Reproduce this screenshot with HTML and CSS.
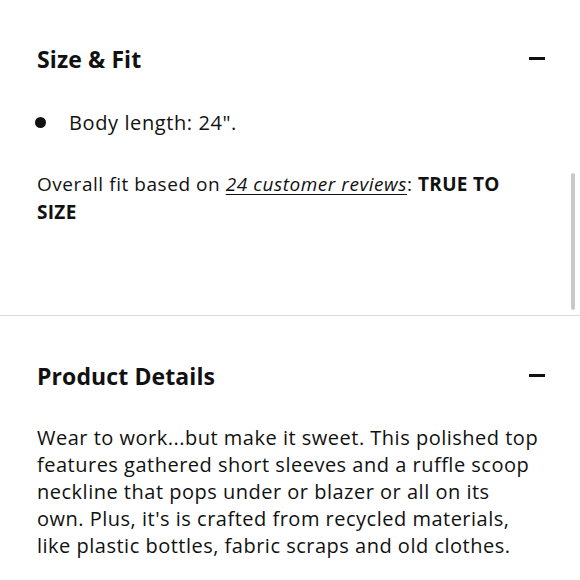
FILE: index.html
```html
<!DOCTYPE html>
<html>
<head>
<meta charset="utf-8">
<link rel="stylesheet" href="styles.css">
</head>
<body>
<div class="page">
  <section class="panel panel-fit">
    <div class="panel-head">
      <h2 class="panel-title">Size &amp; Fit</h2>
      <span class="toggle" aria-hidden="true"></span>
    </div>
    <ul class="bullets">
      <li>Body length: 24".</li>
    </ul>
    <p class="fit-note">Overall fit based on <a class="reviews" href="#">24 customer reviews</a>: <strong>TRUE TO SIZE</strong></p>
    <div class="scrollbar"></div>
  </section>
  <section class="panel panel-details">
    <div class="panel-head">
      <h2 class="panel-title">Product Details</h2>
      <span class="toggle" aria-hidden="true"></span>
    </div>
    <p class="desc">Wear to work...but make it sweet. This polished top features gathered short sleeves and a ruffle scoop neckline that pops under or blazer or all on its own. Plus, it's is crafted from recycled materials, like plastic bottles, fabric scraps and old clothes.</p>
  </section>
</div>
</body>
</html>
```

FILE: styles.css
```css
html, body {
  margin: 0;
  padding: 0;
  background: #fff;
}
body {
  font-family: "Open Sans", sans-serif;
  color: #111;
  width: 580px;
  height: 580px;
  overflow: hidden;
}
.page {
  display: flex;
  flex-direction: column;
}
.panel {
  position: relative;
  padding: 0 35px 0 37px;
}
.panel-fit {
  height: 316px;
  border-bottom: 1px solid #d9d9d9;
  box-sizing: border-box;
  padding-top: 43px;
}
.panel-details {
  padding-top: 44px;
}
.panel-head {
  display: flex;
  align-items: center;
  justify-content: space-between;
  height: 32px;
}
.panel-title {
  margin: 0;
  font-size: 23px;
  font-weight: 700;
  letter-spacing: 0.1px;
}
.toggle {
  display: block;
  width: 16px;
  height: 2.5px;
  margin-top: -1px;
  background: #111;
}
.bullets {
  margin: 35px 0 0;
  padding: 0;
  list-style: none;
}
.bullets li {
  position: relative;
  padding-left: 32px;
  font-size: 20px;
  line-height: 26px;
  letter-spacing: 0.6px;
}
.bullets li::before {
  content: "";
  position: absolute;
  left: -2px;
  top: 7px;
  width: 11px;
  height: 11px;
  border-radius: 50%;
  background: #111;
}
.fit-note {
  margin: 34px 0 0;
  padding-right: 5px;
  font-size: 19px;
  line-height: 28px;
  letter-spacing: 0.55px;
}
.reviews {
  color: inherit;
  font-style: italic;
  text-decoration: underline;
  text-underline-offset: 3px;
  text-decoration-thickness: 1px;
}
.fit-note strong {
  font-weight: 700;
  letter-spacing: 0.3px;
}
.scrollbar {
  position: absolute;
  right: 5px;
  top: 173px;
  width: 4px;
  height: 137px;
  border-radius: 2px;
  background: #c9c9c9;
}
.desc {
  margin: 32px 0 0;
  padding-right: 5px;
  font-size: 20px;
  line-height: 27px;
  letter-spacing: 0.5px;
}
```
